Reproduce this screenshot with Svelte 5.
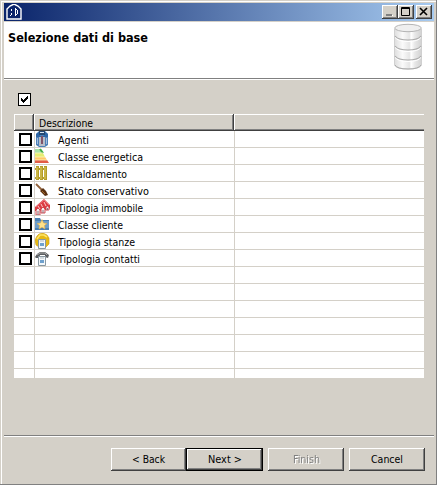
<script>
  const items = [
    ['Agenti', 31], ['Classe energetica', 85], ['Riscaldamento', 69], ['Stato conservativo', 91],
    ['Tipologia immobile', 85], ['Classe cliente', 65], ['Tipologia stanze', 77], ['Tipologia contatti', 82]
  ];
  const rows = Array.from({ length: 14 }, (_, i) => items[i] ?? null);
</script>

{#snippet label(text, width, bold = false)}
  <svg class="label" class:bold width={width} height="16" overflow="visible"><text x="0" y="12" textLength={width} lengthAdjust="spacingAndGlyphs">{text}</text></svg>
{/snippet}

{#snippet icon(i)}
  <svg class="icon" width="16" height="16" viewBox="0 0 16 16">
    {#if i === 0}
      <path d="M1 3L4 0H10L13 3V14L10 16H4L1 14Z" fill="#4d80b8"/><path d="M4 5H10V15H4Z" fill="#b8bdc8"/><path d="M1 3L4 1L5 5H9L10 1L13 3V6H1Z" fill="#2d66a6"/><path d="M4 0H10V4H4Z" fill="#234873"/><path d="M5 1H9V2H5Z" fill="#d8e7f5"/><path d="M6 5H8V13H6Z" fill="#805368"/><path d="M2 7H3V13H2ZM11 7H12V13H11Z" fill="#a3bddb"/>
    {:else if i === 1}
      <path d="M0 1H6L8 5H0Z" fill="#a8e2a6"/><path d="M0 5H8L10 9H0Z" fill="#e5ed70"/><path d="M0 9H10L12 12H0Z" fill="#ffc967"/><path d="M0 12H12L14 15H0Z" fill="#e25c46"/><path d="M5 1L8 5" stroke="#42ad45" stroke-width="2"/><path d="M0 5H8M0 9H10M0 12H12" stroke="#fff6bf" stroke-width=".8"/>
    {:else if i === 2}
      <path d="M0 3H12V5H0ZM0 12H12V14H0Z" fill="#b49d2b"/><path d="M1 1H4V15H1ZM5 1H8V15H5ZM9 1H12V15H9Z" fill="#b39b27"/><path d="M2 2V14M6 2V14M10 2V14" stroke="#e0cf62" stroke-width="1"/>
    {:else if i === 3}
      <path d="M1 2L7 8" stroke="#93633c" stroke-width="1.8"/><path d="M5 9L8 6L11 9L13 13L10 14Z" fill="#593010"/><path d="M7 9L10 12" stroke="#a66b2b"/>
    {:else if i === 4}
      <path d="M0 8L9 0L15 6V9L13 11L0 12Z" fill="#dc3a41"/><path d="M1 8L9 1L14 6" fill="none" stroke="#ef8286" stroke-width=".8"/><path d="M3 7L5 10M6 5L8 9M9 3L11 7" stroke="#ffd9d9" stroke-width=".9"/><path d="M1 11L3 9L5 11V16H1ZM6 10L8 8L10 10V14H6ZM11 8L12.5 7L14 8V11H11Z" fill="#f4eeee" stroke="#cc3b44" stroke-width=".9"/><path d="M3 12V16M8 11V14M12.5 9V11" stroke="#77535c" stroke-width=".8"/>
    {:else if i === 5}
      <path d="M0 2H5L6 4H14V14H0Z" fill="#477eb3"/><path d="M0 5H14V12H0Z" fill="#6b9cca"/><path d="M7 3.5L8.5 7L12 7.5L9.5 9.5L10 13L7 11.3L4 13L4.5 9.5L2 7.5L5.5 7Z" fill="#ffe28a" stroke="#e0ad48" stroke-width=".6"/>
    {:else}
      {#if i === 6}<path d="M4 1L8 0L12 2L14 5V11L11 14H4L1 12L0 7L2 3Z" fill="#e6b914" stroke="#c99913" stroke-width=".6"/><path d="M2 6L5 2H9L12 4" fill="none" stroke="#ffe566" stroke-width="1.6"/>{:else}<path d="M0 7L2 4L5 2H10L14 5L13 8L10 7V5H5L4 8H1Z" fill="#5b5e61"/><path d="M2 5L5 3H10L12 5" fill="none" stroke="#aaa"/>{/if}
      <path d="M3.5 6.5H10.5V15.5H3.5Z" fill="#f4f8fa" stroke="#8998a2"/><path d="M5 8H9" stroke="#b3bdc4"/><path d="M5 10H9V13H5Z" fill="#6fa1cd"/>
    {/if}
  </svg>
{/snippet}

<main>
  <header class="titlebar">
    <svg class="house" width="16" height="16" viewBox="0 0 16 16"><path d="M1 15V5L4 2L8 0L12 2L15 5V15Z" fill="#0b246a" stroke="#fff" stroke-width="1.4"/><path d="M5 5H6V7H5ZM5 9H6V11H5ZM4 11H5V12H4ZM9 4H10V12H9ZM10 5H11V6H10ZM11 6H12V10H11ZM10 10H11V11H10Z" fill="#fff"/></svg>
    <div class="controls">
      <span class="control"><svg width="14" height="12"><path d="M4 9.5H10" stroke="#fff" stroke-width="1"/><path d="M3 9H9" stroke="#808080" stroke-width="2"/></svg></span>
      <span class="control"><svg width="14" height="12"><path d="M2.5 1.5H10.5V9.5H2.5ZM2 2.5H11" fill="none" stroke="#000"/></svg></span>
      <span class="control close"><svg width="14" height="12"><path d="M3 2L10 9M10 2L3 9" stroke="#000" stroke-width="1.6"/></svg></span>
    </div>
  </header>
  <section class="heading">
    {@render label('Selezione dati di base', 140, true)}
    <svg class="database" width="30" height="48" viewBox="0 0 30 48">
      <defs><linearGradient id="metal"><stop stop-color="#ddd"/><stop offset=".3" stop-color="#fafafa"/><stop offset=".55" stop-color="#e6e6e6"/><stop offset=".62" stop-color="#fff"/><stop offset=".75" stop-color="#e8e8e8"/><stop offset="1" stop-color="#d2d2d2"/></linearGradient></defs>
      <path d="M1.5 6V42Q3 46 15 46Q27 46 28.5 42V6Z" fill="url(#metal)" stroke="#d0d0d0"/>
      <path d="M2 42Q4 46 15 46Q26 46 28 42" fill="none" stroke="#aaa"/>
      <path d="M2 13Q5 17 15 17Q25 17 28 13M2 23Q5 27 15 27Q25 27 28 23M2 33Q5 37 15 37Q25 37 28 33" fill="none" stroke="#aaa" stroke-width="1.2"/>
      <path d="M2 14.5Q5 18.5 15 18.5Q25 18.5 28 14.5M2 24.5Q5 28.5 15 28.5Q25 28.5 28 24.5M2 34.5Q5 38.5 15 38.5Q25 38.5 28 34.5" fill="none" stroke="#fff"/>
      <ellipse cx="15" cy="5" rx="13.3" ry="3.7" fill="#efefef" stroke="#b5b5b5"/>
    </svg>
  </section>
  <section class="content">
    <span class="all"><svg width="11" height="11"><path d="M2 4V7L4 9L9 4V1L4 6Z" shape-rendering="crispEdges"/></svg></span>
    <div class="table">
      <div class="thead"><span class="c1"></span><span class="c2">{@render label('Descrizione', 54)}</span><span class="c3"></span></div>
      {#each rows as row, i}
        <div class="row"><span class="c1">{#if row}<i class="check"></i>{/if}</span><span class="c2">{#if row}{@render icon(i)}{@render label(row[0], row[1])}{/if}</span><span class="c3"></span></div>
      {/each}
      <div class="row last"><span class="c1"></span><span class="c2"></span><span class="c3"></span></div>
    </div>
  </section>
  <footer>
    <button>{@render label('< Back', 33)}</button>
    <button class="default"><span>{@render label('Next >', 34)}</span></button>
    <button class="finish" disabled>{@render label('Finish', 27)}</button>
    <button class="cancel">{@render label('Cancel', 32)}</button>
  </footer>
</main>

<style>
  * { box-sizing: border-box; }
  main { width: 437px; height: 485px; padding: 3px 3px 0 4px; background: #d4d0c8; box-shadow: inset -1px -1px #808080, inset 1px 1px #d4d0c8, inset 2px 2px #fff; overflow: hidden; display: flex; flex-direction: column; }
  svg { display: block; flex: none; }
  .label { font: 11px "DejaVu Sans Condensed", "DejaVu Sans", sans-serif; fill: #000; }
  .bold { font: bold 12px "DejaVu Sans Condensed", "DejaVu Sans", sans-serif; }
  .titlebar { height: 18px; background: linear-gradient(90deg, #0a246a, #a6caf0); display: flex; justify-content: space-between; padding: 0 2px; flex: none; }
  .controls { display: flex; padding-top: 2px; }
  .control { width: 16px; height: 14px; padding: 1px; background: #d4d0c8; box-shadow: inset -1px -1px #404040, inset 1px 1px #fff, inset -2px -2px #808080; }
  .close { margin-left: 2px; }
  .house { margin-top: 1px; }
  .heading { margin-top: 1px; height: 58px; background: #fff; border-bottom: 1px solid #fff; box-shadow: inset 0 -1px #808080; display: flex; justify-content: space-between; padding: 8px 11px 0 4px; flex: none; }
  .database { margin-top: -7px; }
  .content { height: 355px; padding: 13px 10px 0; flex: none; }
  .all { display: block; width: 13px; height: 13px; margin-left: 4px; border: 1px solid #000; background: #fff; }
  .table { margin-top: 8px; width: 410px; }
  .thead, .row { display: flex; }
  .thead { height: 17px; }
  .thead span { box-shadow: inset -1px -1px #404040, inset 1px 1px #fff, inset -2px -2px #808080; }
  .thead .c2 { padding: 1px 0 0 5px; }
  .thead .c3 { box-shadow: inset 0 -1px #404040, inset 1px 1px #fff, inset 0 -2px #808080; }
  .c1 { width: 20px; }
  .c2 { width: 200px; display: flex; }
  .c3 { width: 190px; }
  .row { height: 17px; background: #fff; border-bottom: 1px solid #d4d0c8; }
  .row .c2, .row .c3 { border-left: 1px solid #d4d0c8; }
  .row .c2 .label { margin: 1px 0 -1px 7px; }
  .last { height: 9px; border: 0; }
  .check { display: block; width: 13px; height: 13px; border: 2px solid #000; margin: 2px 0 0 5px; background: #fff; }
  footer { height: 49px; border-top: 1px solid #808080; box-shadow: inset 0 1px #fff; display: flex; padding: 12px 0 0 107px; flex: none; }
  button { border: 0; border-radius: 0; padding: 0 0 2px; width: 76px; height: 23px; background: #d4d0c8; box-shadow: inset -1px -1px #404040, inset 1px 1px #fff, inset -2px -2px #808080; display: flex; align-items: center; justify-content: center; }
  button:first-child { width: 75px; }
  .default { width: 77px; padding: 0; border: 1px solid #000; }
  .default span { padding-bottom: 2px; }
  .finish { margin-left: 5px; }
  .finish .label { fill: #808080; filter: drop-shadow(1px 1px 0 #fff); }
  .cancel { margin-left: 5px; }
</style>
